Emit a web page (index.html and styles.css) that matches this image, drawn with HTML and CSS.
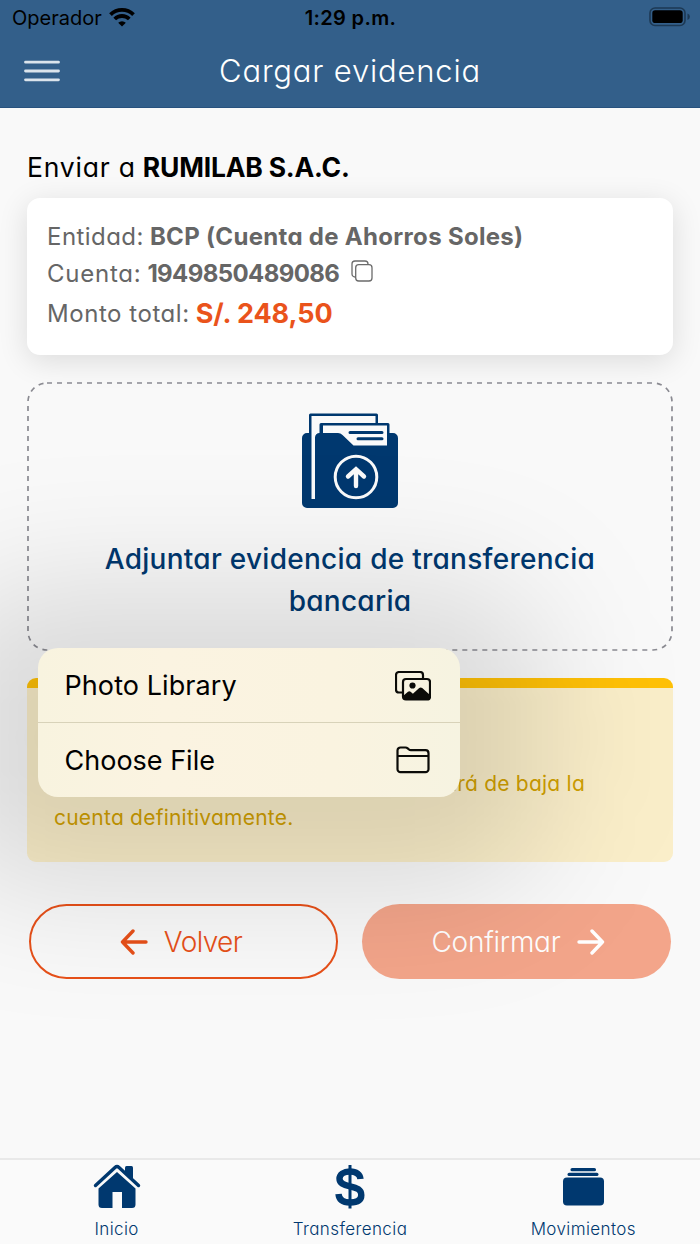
FILE: index.html
```html
<!DOCTYPE html>
<html lang="es">
<head>
<meta charset="utf-8">
<title>Cargar evidencia</title>
<link rel="stylesheet" href="styles.css">
</head>
<body>
<div class="app">
  <header class="header">
    <div class="status">
      <div class="carrier"><span class="t carrier-name">Operador</span>
        <svg class="wifi" width="26" height="19" viewBox="0 0 26 19" fill="none" stroke="#000" stroke-width="3.8"><path d="M1.500 6.700a16.300 16.300 0 0 1 23 0M5.700 11a10.400 10.400 0 0 1 14.600 0"/><path d="M13 18.600l-3.800-3.900a5.400 5.400 0 0 1 7.600 0z" fill="#000" stroke="none"/></svg>
      </div>
      <span class="t clock">1:29 p.m.</span>
      <svg class="battery" width="42" height="20" viewBox="0 0 42 20"><rect x="1" y="1" width="35" height="17.5" rx="5" fill="none" stroke="#1d3954" stroke-width="1.6"/><rect x="3.3" y="3.3" width="30.4" height="12.8" rx="2.8"/><path d="M38.5 6.5q2.4 1 2.4 3.2t-2.4 3.2z" fill="#1d3954"/></svg>
    </div>
    <div class="titlebar">
      <svg class="burger" width="36" height="22" viewBox="0 0 36 22" stroke="#dbe4ec" stroke-width="2.8" stroke-linecap="round"><path d="M1.5 2.2h33M1.5 11h33M1.5 19.8h33"/></svg>
      <h1 class="t title">Cargar evidencia</h1>
    </div>
  </header>

  <main class="main">
    <h2 class="recipient"><span class="t r1">Enviar a</span> <b class="t r2">RUMILAB S.A.C.</b></h2>
    <section class="card">
      <p class="row"><span class="t k1">Entidad:</span><b class="t v1">BCP (Cuenta de Ahorros Soles)</b></p>
      <p class="row"><span class="t k2">Cuenta:</span><b class="t v2">1949850489086</b>
        <svg class="copy" width="22" height="22" viewBox="0 0 22 22" fill="none" stroke="#6b6b6b" stroke-width="1.3"><rect x="4.7" y="4.7" width="16.3" height="16.3" rx="3"/><path d="M4.7 17H4a3 3 0 0 1-3-3V4a3 3 0 0 1 3-3h10a3 3 0 0 1 3 3v.7"/></svg></p>
      <p class="row total"><span class="t k3">Monto total:</span><b class="t v3">S/. 248,50</b></p>
    </section>

    <section class="drop">
      <svg class="outline" width="646" height="269" viewBox="0 0 646 269" fill="none" stroke="#8b8b92" stroke-width="1.7" stroke-dasharray="5 5"><rect x="1" y="1" width="644" height="267" rx="19"/></svg>
      <svg class="folder" width="96" height="96" viewBox="0 0 96 96"><path d="M5 20h2V2a1.500 1.500 0 0 1 1.500-1.500h66A1.500 1.500 0 0 1 76 2v8h10a1.500 1.500 0 0 1 1.500 1.500V20h3.500a5 5 0 0 1 5 5v65a5 5 0 0 1-5 5H5a5 5 0 0 1-5-5V25a5 5 0 0 1 5-5z" fill="#00386f"/><path d="M9.500 3H73.500v7H19a1.500 1.500 0 0 0-1.500 1.500V20a4.500 4.500 0 0 0-4.500 4.500V86H9.500z" fill="#fafafa"/><path d="M21 12.500H85V32.500H51.500L40.500 22Q38.500 20 36 20H21z" fill="#fafafa"/><path d="M48 19.500h32M56 25.800h24" stroke="#00386f" stroke-width="3" stroke-linecap="round"/><circle cx="54" cy="64" r="20.800" fill="none" stroke="#fafafa" stroke-width="3"/><path d="M54 73V57M46 63.500l8-7.300 8 7.300" fill="none" stroke="#fafafa" stroke-width="4.400" stroke-linecap="round"/></svg>
      <p class="drop-text"><span class="t d1">Adjuntar evidencia de transferencia</span><br><span class="t d2">bancaria</span></p>
    </section>

    <section class="warning">
      <p class="w-line w-end"><span class="t w1">dará de baja la</span></p>
      <p class="w-line"><span class="t w2">cuenta definitivamente.</span></p>
    </section>

    <div class="actions">
      <button class="btn back"><svg width="28" height="26" viewBox="0 0 28 26" fill="none" stroke="#e75019" stroke-width="3.400" stroke-linecap="round" stroke-linejoin="round"><path d="M26 13H2.500M13 2L2.500 13 13 24"/></svg><span class="t b1">Volver</span></button>
      <button class="btn confirm"><span class="t b2">Confirmar</span><svg width="28" height="26" viewBox="0 0 28 26" fill="none" stroke="#fff" stroke-width="3.400" stroke-linecap="round" stroke-linejoin="round"><path d="M2 13H25.500M15 2l10.500 11L15 24"/></svg></button>
    </div>

    <div class="menu-shadow"></div>
    <div class="menu">
      <div class="item"><span class="t m1">Photo Library</span>
        <svg width="36" height="30" viewBox="0 0 36 30" fill="none" stroke="#0b0b08" stroke-width="2.2"><path d="M7 21.500H4a3 3 0 0 1-3-3V4a3 3 0 0 1 3-3h21a3 3 0 0 1 3 3v3"/><rect x="8" y="8" width="27" height="20.500" rx="3"/><circle cx="17.500" cy="14.500" r="3.100" fill="#0b0b08" stroke="none"/><path d="M8 25l5-4.200q1.300-1 2.600 0l2.300 2 6.300-5.700q1.500-1.200 3 0l7.800 7v2a2.500 2.500 0 0 1-2.500 2.500h-22A2.500 2.500 0 0 1 8 26z" fill="#0b0b08" stroke="none"/></svg></div>
      <div class="item"><span class="t m2">Choose File</span>
        <svg width="36" height="30" viewBox="0 0 36 30" fill="none" stroke="#0b0b08" stroke-width="2.2"><path d="M2.500 10V5.500a3 3 0 0 1 3-3h5q1.200 0 2.200.9l1 .9q1 .9 2.300.9h14.500a3 3 0 0 1 3 3v16a3 3 0 0 1-3 3h-25a3 3 0 0 1-3-3zM2.500 11h31"/></svg></div>
    </div>
  </main>

  <nav class="tabs">
    <a class="tab"><svg width="48" height="46" viewBox="0 0 48 46" fill="#00386f"><path d="M2.500 22.500L22 4.500q2-1.800 4 0l19.500 18" fill="none" stroke="#00386f" stroke-width="3.400" stroke-linecap="round"/><path d="M32 6V4.500A1.500 1.500 0 0 1 33.500 3h5A1.500 1.500 0 0 1 40 4.500V17l-8-7z"/><path d="M24 9L42.500 25.500v16a3.500 3.500 0 0 1-3.500 3.500H29V29H19.500V45H9a3.500 3.500 0 0 1-3.500-3.500v-16z"/></svg><span class="t n1">Inicio</span></a>
    <a class="tab"><svg width="48" height="46" viewBox="0 0 48 46" fill="none" stroke="#00386f"><path d="M24 2v43.500" stroke-width="3"/><path d="M34.500 16C34 11.500 30.500 8.500 24 8.500S13.500 11.500 13.500 15.800 17 21.800 24 23.300s11.300 3.200 11.300 8.700S31 39.500 24 39.500 13 36.500 12.500 31" stroke-width="6.400"/></svg><span class="t n2">Transferencia</span></a>
    <a class="tab"><svg width="48" height="46" viewBox="0 0 48 46" fill="#00386f"><rect x="11.500" y="5" width="25.500" height="3.300" rx="1.600"/><rect x="8.500" y="9.700" width="31" height="3.300" rx="1.600"/><rect x="4" y="14.500" width="41" height="28" rx="4"/></svg><span class="t n3">Movimientos</span></a>
  </nav>
</div>
</body>
</html>
```

FILE: styles.css
```css
* { box-sizing: border-box; }
body { margin: 0; font-family: Inter, "Open Sans", sans-serif; font-feature-settings: "cv11"; background: #f9f9f9; color: #000; }
h1, h2, p { margin: 0; font-weight: 400; }
svg { display: block; flex: none; }
.t { white-space: nowrap; }
.app { height: 1244px; display: flex; flex-direction: column; overflow: hidden; }

.header { height: 108px; flex: none; background: #335f8a; border-bottom: 1px solid #28527e; position: relative; z-index: 2; }
.status { height: 35px; padding: 0 9px 0 12px; display: grid; grid-template-columns: 1fr auto 1fr; align-items: center; font-size: 20px; font-feature-settings: normal; }
.carrier { display: flex; align-items: center; gap: 7px; }
.wifi { margin-top: -1px; }
.clock { font-weight: 600; letter-spacing: .35px; margin-left: -2px; }
.battery { justify-self: end; margin-top: -1px; }
.titlebar { height: 71px; display: grid; grid-template-columns: 60px 1fr 60px; align-items: center; }
.burger { margin-left: 24px; }
.title { text-align: center; font-size: 31px; font-weight: 280; letter-spacing: .8px; color: #fff; }

.main { flex: 1; padding: 41px 27px 0; position: relative; }
.recipient { height: 49px; line-height: 36px; font-size: 26.5px; display: flex; gap: 7px; }
.r1 { letter-spacing: .8px; }
.r2 { letter-spacing: -.2px; }
.card { height: 157px; padding: 20px; border-radius: 13px; background: #fff; box-shadow: 0 6px 30px rgba(0,0,0,.12); color: #666; font-size: 24px; }
.row { height: 37px; display: flex; align-items: center; gap: 6px; }
.k1 { letter-spacing: .45px; }
.v1 { letter-spacing: .31px; }
.k2 { letter-spacing: .75px; }
.v2 { letter-spacing: -.6px; }
.k3 { letter-spacing: .55px; }
.total { height: 43px; }
.copy { margin: -6px 0 0 6px; }
.v3 { font-size: 27px; letter-spacing: -.1px; color: #ea531b; }

.drop { height: 269px; margin-top: 27px; padding-top: 31px; position: relative; display: flex; flex-direction: column; align-items: center; }
.outline { position: absolute; inset: 0; }
.drop-text { margin-top: 29px; text-align: center; font-size: 28px; line-height: 42px; font-weight: 500; letter-spacing: .27px; color: #00386f; }

.warning { height: 184px; margin-top: 27px; padding: 79px 27px 0; border-top: 10px solid #ffc107; border-radius: 9px; background: #faeec9; color: #d1a000; font-size: 21px; font-weight: 260; letter-spacing: .23px; }
.w-line { line-height: 34px; }
.w-end { width: 531px; text-align: right; }

.actions { margin-top: 42px; padding: 0 2px; display: grid; grid-template-columns: 1fr 1fr; gap: 24px; }
.btn { height: 75px; border-radius: 38px; display: flex; align-items: center; justify-content: center; gap: 16px; font: inherit; font-feature-settings: inherit; font-size: 28px; font-weight: 260; }
.b1 { letter-spacing: -.6px; }
.b2 { letter-spacing: -.25px; }
.back { padding: 0 5px 0 0; border: 2px solid #e75019; background: transparent; color: #e75019; }
.confirm { padding: 0 0 0 3px; border: 0; background: #f3a58a; color: #fff; }

.menu-shadow { position: absolute; z-index: 1; top: 477px; left: -60px; width: 605px; height: 305px; border-radius: 90px; background: rgba(0,0,0,.125); filter: blur(66px); pointer-events: none; }
.menu { position: absolute; z-index: 1; top: 540px; left: 37.5px; width: 422px; height: 148.5px; border-radius: 20px; background: linear-gradient(90deg, #f8f3df, #fbf3e1 30%, #faf3e0 70%, #f6f3e1); font-size: 27px; font-feature-settings: normal; }
.item { height: 74px; padding: 1px 29px 0 27px; display: flex; align-items: center; justify-content: space-between; }
.m1 { letter-spacing: .08px; }
.item + .item { border-top: 1px solid #d8d2b9; }

.tabs { height: 86px; flex: none; border-top: 2px solid #e9e9e9; background: #fafafa; display: grid; grid-template-columns: repeat(3, 1fr); position: relative; z-index: 2; }
.tab { padding-top: 3px; display: flex; flex-direction: column; align-items: center; gap: 8px; font-size: 17px; line-height: 24px; font-weight: 300; letter-spacing: .4px; color: #00386f; }
```
